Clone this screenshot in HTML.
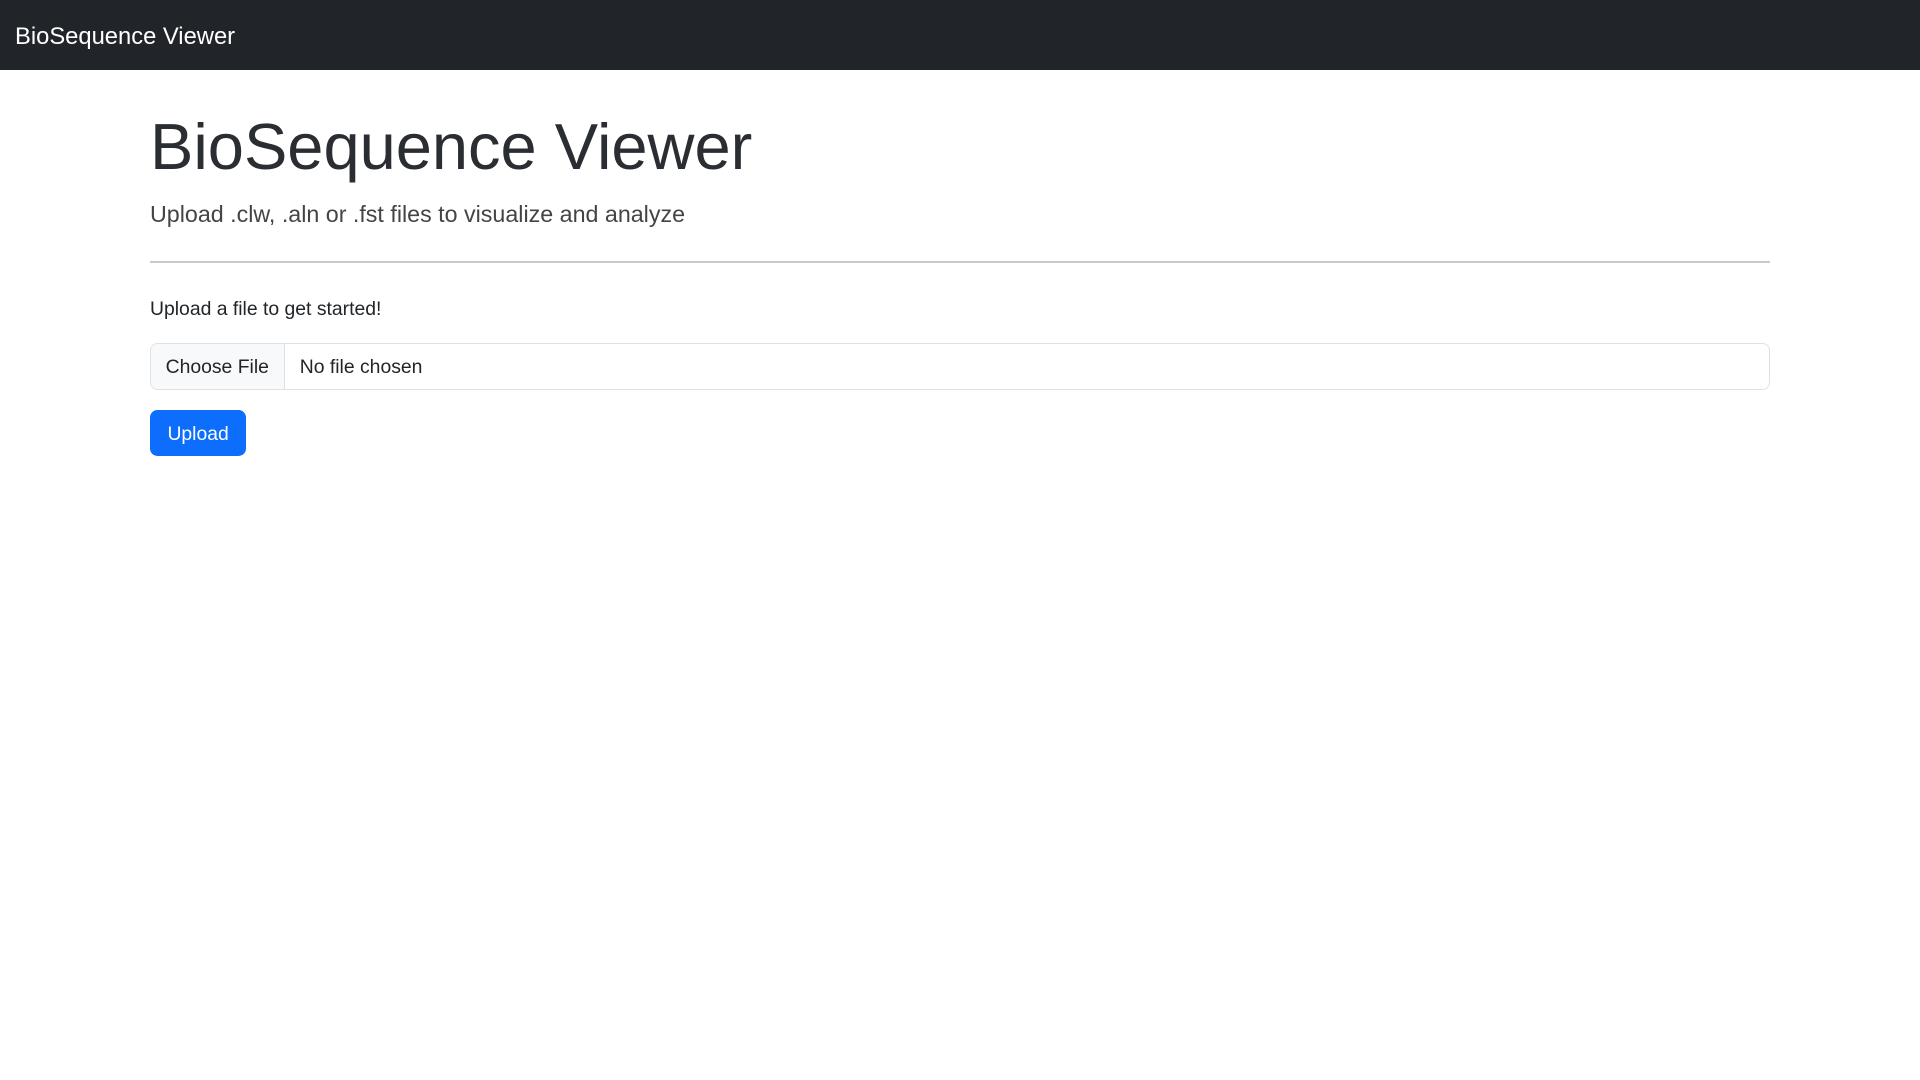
<!DOCTYPE html>
<html><head><meta charset="utf-8">
<style>
html,body{margin:0;padding:0;background:#fff;}
body{zoom:1.25;width:1536px;height:864px;position:relative;font-family:"Liberation Sans",sans-serif;color:#212529;overflow:hidden;}
.nav{position:absolute;left:0;top:0;width:1536px;height:56px;background:#212529;}
.brand{position:absolute;left:12px;top:14px;font-size:19px;color:#fff;line-height:30px;}
.c{position:absolute;left:120px;width:1296px;}
h1{margin:0;font-weight:300;font-size:52px;line-height:67px;top:84px;color:#2a2e33;}
.lead{font-size:18.6px;font-weight:300;line-height:30px;top:157px;color:#444;}
.hr{top:209px;height:1px;background:#c8c9ca;}
.t{top:235px;font-size:15.5px;line-height:24px;}
.inp{top:274px;width:1294px;height:36px;border:1px solid #dee2e6;border-radius:6px;overflow:hidden;font-size:15.5px;line-height:37px;}
.inp .b{position:absolute;left:0;top:0;width:106px;height:36px;background:#f8f9fa;border-right:1px solid #dee2e6;text-align:center;}
.inp .n{position:absolute;left:119px;top:0;}
.btn{position:absolute;left:120px;top:328px;width:77px;height:37px;background:#0d6efd;color:#fff;border-radius:6px;font-size:15.5px;line-height:39px;text-align:center;}
</style></head><body>
<div class="nav"><div class="brand">BioSequence Viewer</div></div>
<h1 class="c">BioSequence Viewer</h1>
<div class="c lead">Upload .clw, .aln or .fst files to visualize and analyze</div>
<div class="c hr"></div>
<div class="c t">Upload a file to get started!</div>
<div class="c inp"><div class="b">Choose File</div><div class="n">No file chosen</div></div>
<div class="btn">Upload</div>
</body></html>
